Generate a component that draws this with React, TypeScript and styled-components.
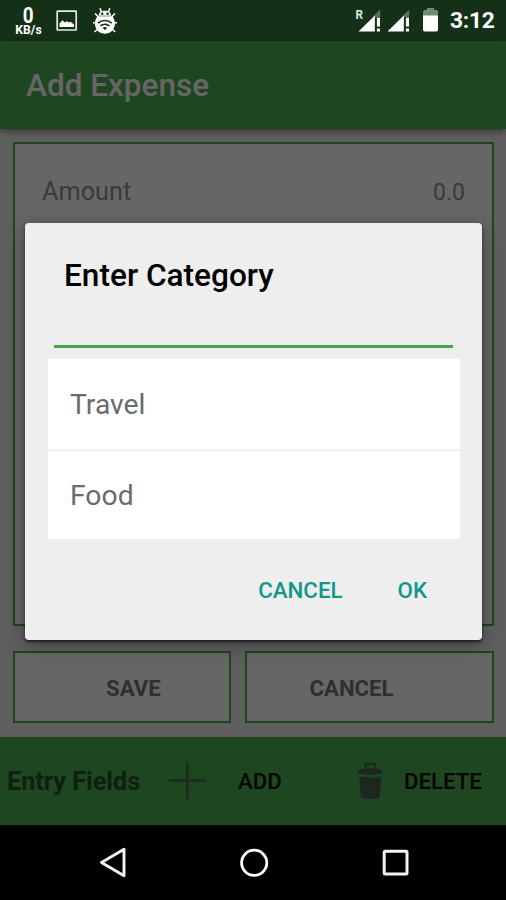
import React from "react";
import styled, { createGlobalStyle } from "styled-components";

const GlobalStyle = createGlobalStyle`
  * { box-sizing: border-box; }
  body { margin: 0; background: #000; font-family: Roboto, "Liberation Sans", sans-serif; }
  button { font: inherit; color: inherit; background: none; border: 0; padding: 0; margin: 0; }
`;

const Screen = styled.div`
  width: 506px;
  height: 900px;
  display: flex;
  flex-direction: column;
  overflow: hidden;
`;

const StatusBar = styled.header`
  height: 41px;
  flex: none;
  display: flex;
  justify-content: space-between;
  background: #143016;
  color: #fff;
`;

const StatusGroup = styled.div<{ $end?: boolean }>`
  display: flex;
  align-items: flex-start;
  padding: ${(p) => (p.$end ? "7px 12px 0 0" : "7px 0 0 14px")};
`;

const Speed = styled.div`
  width: 29px;
  display: flex;
  flex-direction: column;
  align-items: center;
  font-weight: 700;
`;

const SpeedValue = styled.span`
  font-size: 21.5px;
  line-height: 17px;
  transform: scaleX(0.88);
`;

const SpeedUnit = styled.span`
  font-size: 12.2px;
  line-height: 12px;
`;

const Clock = styled.span`
  width: 44px;
  font-size: 22.8px;
  line-height: 28px;
  font-weight: 700;
  letter-spacing: -0.3px;
  margin-left: 11px;
`;

const Icon = styled.svg<{ $left?: number; $top?: number }>`
  display: block;
  flex: none;
  margin-left: ${(p) => p.$left ?? 0}px;
  margin-top: ${(p) => p.$top ?? 0}px;
`;

const Main = styled.main`
  position: relative;
  flex: 1;
  display: flex;
  flex-direction: column;
  background: #eee;
`;

const AppBar = styled.div`
  height: 88px;
  flex: none;
  display: flex;
  align-items: center;
  padding: 1px 26px 0;
  background: #4caf50;
  color: #fff;
  box-shadow: 0 3px 7px rgba(0, 0, 0, 0.4);
`;

const AppTitle = styled.h1`
  margin: 0;
  font-size: 31.5px;
  font-weight: 500;
`;

const Form = styled.section`
  flex: 1;
  display: flex;
  flex-direction: column;
  gap: 25px;
  padding: 13px 12px 14px 13px;
`;

const Panel = styled.div`
  flex: 1;
  border: 2px solid #4caf50;
  background: #fff;
  padding: 0 27px;
`;

const Field = styled.div`
  height: 95px;
  display: flex;
  align-items: center;
  justify-content: space-between;
  color: #919191;
  font-size: 25.3px;
`;

const FieldValue = styled.span`
  font-size: 23px;
  padding-top: 2px;
`;

const Actions = styled.div`
  display: grid;
  grid-template-columns: 218px 1fr;
  gap: 13.5px;
  height: 72px;
`;

const OutlineButton = styled.button<{ $shift: number }>`
  border: 2px solid #4caf50;
  background: #fff;
  color: #777;
  font-size: 22.2px;
  font-weight: 700;
  padding: 2px 0 0 ${(p) => p.$shift}px;
  text-align: left;
`;

const FieldsBar = styled.footer`
  height: 88px;
  flex: none;
  display: flex;
  align-items: center;
  background: #4caf50;
  padding-left: 7px;
`;

const BarTitle = styled.span`
  width: 161px;
  font-size: 25.2px;
  font-weight: 700;
  color: #274f29;
`;

const BarButton = styled.button<{ $width: number; $gap: number }>`
  display: flex;
  align-items: center;
  gap: ${(p) => p.$gap}px;
  width: ${(p) => p.$width}px;
  font-size: 22.2px;
  font-weight: 500;
  color: #050d05;
`;

const Scrim = styled.div`
  position: absolute;
  inset: 0;
  display: flex;
  align-items: center;
  justify-content: center;
  padding: 0 0 3px 1px;
  background: rgba(0, 0, 0, 0.6);
`;

const Dialog = styled.div`
  width: 457px;
  height: 417px;
  border-radius: 4px;
  background: #eee;
  box-shadow: 0 2px 3px rgba(0, 0, 0, 0.6), 0 5px 20px rgba(0, 0, 0, 0.35);
`;

const DialogTitle = styled.h2`
  margin: 0;
  height: 105px;
  padding-left: 39px;
  line-height: 105px;
  font-size: 31.6px;
  font-weight: 500;
  color: #000;
`;

const CategoryInput = styled.div`
  height: 20px;
  margin: 0 29px 11px;
  border-bottom: 3px solid #43a748;
`;

const Options = styled.ul`
  list-style: none;
  margin: 0 22px 0 23px;
  padding: 0;
  background: #fff;
`;

const Option = styled.li`
  height: 90px;
  display: flex;
  align-items: center;
  padding: 1px 22px 0;
  font-size: 28.3px;
  color: #6b6b6b;

  & + & {
    border-top: 2px solid #f0f0f0;
  }
`;

const DialogActions = styled.div`
  height: 101px;
  display: flex;
  align-items: center;
  justify-content: flex-end;
  gap: 55px;
  padding: 1px 55px 0 0;
  color: #12978a;
  font-size: 22.3px;
  font-weight: 500;
`;

const NavBar = styled.nav`
  height: 75px;
  flex: none;
  display: flex;
  align-items: center;
  justify-content: center;
  gap: 112px;
  background: #000;
`;

const PictureIcon = () => (
  <Icon $left={13} $top={3} width="22" height="21" viewBox="0 0 22 21">
    <rect x="1.2" y="1.2" width="19" height="18.8" rx="0.6" fill="none" stroke="#e6ece4" strokeWidth="1.7" />
    <path d="M3.500 17V13.500l3-3.300 2.200 2.200 2-1.200 2 1.400 1.800-.8 3.500 2.800V17z" fill="#fff" />
  </Icon>
);

const BugIcon = () => (
  <Icon $left={13} $top={0} width="28" height="28" viewBox="0 0 28 28">
    <path d="M9 1.200l1.500 4M18.800 1.200l-1.500 4M4 6.500l4 4M24 6.500l-4 4M2 15.800h4M22 15.800h4M3.500 25l4-3.500M24.300 25l-4-3.500" stroke="#fff" strokeWidth="1.600" />
    <path d="M7.500 8.800C8.200 5 10.500 3.800 13.900 3.800S19.600 5 20.300 8.800z" fill="#fff" />
    <path d="M6.500 9.200h14.800C23.400 12 24.300 15 23.800 18c-1 5.500-4.900 8.700-9.900 8.700S5 23.500 4 18c-.5-3 .4-6 2.500-8.800z" fill="#fff" />
    <circle cx="11.200" cy="6.700" r="1.200" fill="#143016" />
    <circle cx="16.600" cy="6.700" r="1.200" fill="#143016" />
    <path d="M7 16.200c4-3.600 9.800-3.600 13.800 0M9.400 18.900c2.600-2.200 6.400-2.200 9 0" fill="none" stroke="#143016" strokeWidth="1.700" />
    <path d="M11.600 20.700q2.300-1.400 4.600 0l-2.300 2.500z" fill="#143016" />
  </Icon>
);

const SignalIcon = ({ roaming = false, left = 0 }: { roaming?: boolean; left?: number }) => (
  <Icon $left={left} width="27" height="26" viewBox="0 0 27 26">
    {roaming && (
      <text x="0.500" y="12" fontSize="13" fontWeight="700" fill="#dfe7df" textLength="7.500" lengthAdjust="spacingAndGlyphs">
        R
      </text>
    )}
    <path d="M25.200 2.500L18.500 9v7h6.700z" fill="#4f7555" />
    <path d="M3.500 24.500L19.800 8.500v16z" fill="#fff" />
    <path d="M20 10.500h7v15h-7z" fill="#143016" />
    <path d="M21.900 10.800h3.100v8.700h-3.100zM21.900 21.500h3.100v3h-3.100z" fill="#fff" />
  </Icon>
);

const BatteryIcon = () => (
  <Icon $left={11} width="17" height="26" viewBox="0 0 17 26">
    <path d="M1 9V4.500Q1 3 2.500 3H5V1h7v2h2.500Q16 3 16 4.500V9z" fill="#718b72" />
    <path d="M1 8.500h15v14.300q0 1.700-1.700 1.700H2.700Q1 24.500 1 22.800z" fill="#fff" />
  </Icon>
);

const PlusIcon = () => (
  <Icon width="40" height="40" viewBox="0 0 40 40">
    <path d="M1 19.500h36.500M19.300 1v37" stroke="#4d664f" strokeWidth="2.600" />
  </Icon>
);

const TrashIcon = () => (
  <Icon width="27" height="38" viewBox="0 0 27 38">
    <path d="M8.800 7V2.200h9.400V7" fill="none" stroke="#49624b" strokeWidth="2.200" />
    <path d="M0.500 10.200C1 7.800 4 6.500 8 6.500h11c4 0 6.500 1.300 7 3.500-3 2.300-8 2.700-12.800 2.700S3.200 12.400.5 10.200z" fill="#49624b" />
    <path d="M2.300 14.200q11 2.600 22 0l-1 17.500q-.5 5-4.300 5H7.600q-3.800 0-4.300-5z" fill="#49624b" />
  </Icon>
);

const categories = ["Travel", "Food"];

export default function App() {
  return (
    <Screen>
      <GlobalStyle />
      <StatusBar>
        <StatusGroup>
          <Speed>
            <SpeedValue>0</SpeedValue>
            <SpeedUnit>KB/s</SpeedUnit>
          </Speed>
          <PictureIcon />
          <BugIcon />
        </StatusGroup>
        <StatusGroup $end>
          <SignalIcon roaming />
          <SignalIcon left={2.5} />
          <BatteryIcon />
          <Clock>3:12</Clock>
        </StatusGroup>
      </StatusBar>
      <Main>
        <AppBar>
          <AppTitle>Add Expense</AppTitle>
        </AppBar>
        <Form>
          <Panel>
            <Field>
              Amount<FieldValue>0.0</FieldValue>
            </Field>
          </Panel>
          <Actions>
            <OutlineButton $shift={91}>SAVE</OutlineButton>
            <OutlineButton $shift={63}>CANCEL</OutlineButton>
          </Actions>
        </Form>
        <FieldsBar>
          <BarTitle>Entry Fields</BarTitle>
          <BarButton $width={189} $gap={30}>
            <PlusIcon />
            ADD
          </BarButton>
          <BarButton $width={140} $gap={20}>
            <TrashIcon />
            DELETE
          </BarButton>
        </FieldsBar>
        <Scrim>
          <Dialog role="dialog">
            <DialogTitle>Enter Category</DialogTitle>
            <CategoryInput />
            <Options>
              {categories.map((name) => (
                <Option key={name}>{name}</Option>
              ))}
            </Options>
            <DialogActions>
              <button>CANCEL</button>
              <button>OK</button>
            </DialogActions>
          </Dialog>
        </Scrim>
      </Main>
      <NavBar>
        <Icon $left={1} width="30" height="32" viewBox="0 0 30 32">
          <path d="M3.500 15.500L26 2.300v26.400z" fill="none" stroke="#f4f4f4" strokeWidth="2.900" strokeLinejoin="round" />
        </Icon>
        <Icon width="30" height="30" viewBox="0 0 30 30">
          <circle cx="14.200" cy="14.800" r="12.600" fill="none" stroke="#fff" strokeWidth="2.800" />
        </Icon>
        <Icon width="28" height="28" viewBox="0 0 28 28">
          <rect x="2.200" y="2.200" width="22.800" height="22.800" rx="1" fill="none" stroke="#f4f4f4" strokeWidth="3" />
        </Icon>
      </NavBar>
    </Screen>
  );
}
